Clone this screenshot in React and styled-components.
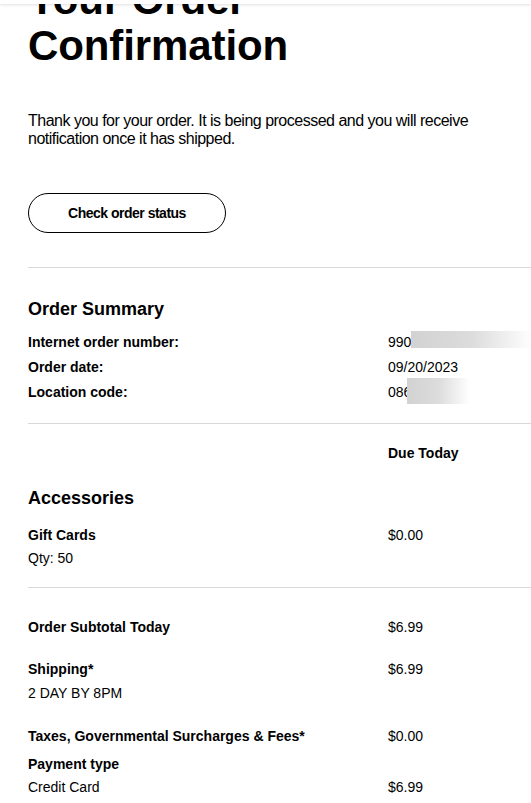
import React from 'react'
import styled, { createGlobalStyle } from 'styled-components'

const GlobalStyle = createGlobalStyle`
  html, body {
    margin: 0;
    padding: 0;
    background: #fff;
    color: #000;
    font-family: Arial, "Liberation Sans", Helvetica, sans-serif;
    overflow: hidden;
  }
`

const TopBar = styled.div`
  position: fixed;
  top: 0;
  left: 0;
  right: 0;
  height: 4px;
  background: #fff;
  box-shadow: 0 1px 3px rgba(0, 0, 0, 0.12);
  z-index: 5;
`

const Page = styled.main`
  padding-left: 28px;
`

const Title = styled.h1`
  margin: -23px 0 0;
  max-width: 320px;
  font-size: 42px;
  line-height: 46px;
  font-weight: 700;
  letter-spacing: -0.1px;
`

const Intro = styled.p`
  margin: 43px 0 0;
  max-width: 460px;
  font-size: 16px;
  line-height: 18px;
  letter-spacing: -0.5px;
`

const OutlineButton = styled.button`
  margin-top: 45px;
  width: 198px;
  height: 40px;
  border: 1px solid #000;
  border-radius: 20px;
  background: #fff;
  font-family: Arial, "Liberation Sans", sans-serif;
  font-size: 14px;
  font-weight: 700;
  letter-spacing: -0.5px;
  color: #000;
  cursor: pointer;
`

const Divider = styled.hr`
  margin: ${p => p.$top || 0}px 0 0;
  border: 0;
  border-top: 1px solid #d8d8d8;
  height: 0;
`

const SectionTitle = styled.h2`
  margin: ${p => p.$top || 0}px 0 0;
  font-size: 18px;
  line-height: 22px;
  font-weight: 700;
`

const Rows = styled.div`
  display: grid;
  grid-template-columns: 360px 1fr;
  row-gap: ${p => p.$gap || 0}px;
  margin-top: ${p => p.$top || 0}px;
  font-size: 14px;
  line-height: 16px;
`

const Label = styled.div`
  font-weight: 700;
`

const Value = styled.div`
  font-weight: ${p => (p.$bold ? 700 : 400)};
  white-space: nowrap;
`

const Note = styled.div`
  grid-column: 1 / -1;
  margin-top: ${p => p.$top || 0}px;
`

const Redacted = styled.span`
  display: inline-block;
  vertical-align: top;
  width: ${p => p.$w}px;
  height: ${p => p.$h}px;
  margin-top: ${p => p.$dy}px;
  margin-left: ${p => p.$dx || 0}px;
  background: linear-gradient(90deg, #d2d2d2 0%, #dcdcdc 50%, #ffffff 100%);
`

const Item = styled.div`
  display: grid;
  grid-template-columns: 360px 1fr;
  margin-top: ${p => p.$top || 0}px;
  font-size: 14px;
  line-height: 16px;
`

const App = () => {
  return (
    <>
      <GlobalStyle />
      <TopBar />
      <Page>
        <Title>Your Order Confirmation</Title>
        <Intro>
          Thank you for your order. It is being processed and you will receive notification once it has shipped.
        </Intro>
        <OutlineButton>Check order status</OutlineButton>
        <Divider $top={34} />

        <SectionTitle $top={30}>Order Summary</SectionTitle>
        <Rows $top={14} $gap={9}>
          <Label>Internet order number:</Label>
          <Value>990<Redacted $w={122} $h={17} $dy={-3} /></Value>
          <Label>Order date:</Label>
          <Value>09/20/2023</Value>
          <Label>Location code:</Label>
          <Value>086<Redacted $w={63} $h={26} $dy={-6} $dx={-4} /></Value>
        </Rows>
        <Divider $top={19} />

        <Rows $top={21}>
          <div />
          <Value $bold>Due Today</Value>
        </Rows>

        <SectionTitle $top={26}>Accessories</SectionTitle>
        <Item $top={18}>
          <Label>Gift Cards</Label>
          <Value>$0.00</Value>
          <Note $top={7}>Qty: 50</Note>
        </Item>
        <Divider $top={21} />

        <Item $top={31}>
          <Label>Order Subtotal Today</Label>
          <Value>$6.99</Value>
        </Item>
        <Item $top={26}>
          <Label>Shipping*</Label>
          <Value>$6.99</Value>
          <Note $top={8}>2 DAY BY 8PM</Note>
        </Item>
        <Item $top={27}>
          <Label>Taxes, Governmental Surcharges &amp; Fees*</Label>
          <Value>$0.00</Value>
        </Item>
        <Item $top={12}>
          <Label>Payment type</Label>
          <div />
          <Note $top={7}>
            <Item>
              <span>Credit Card</span>
              <Value>$6.99</Value>
            </Item>
          </Note>
        </Item>
      </Page>
    </>
  )
}

export default App
